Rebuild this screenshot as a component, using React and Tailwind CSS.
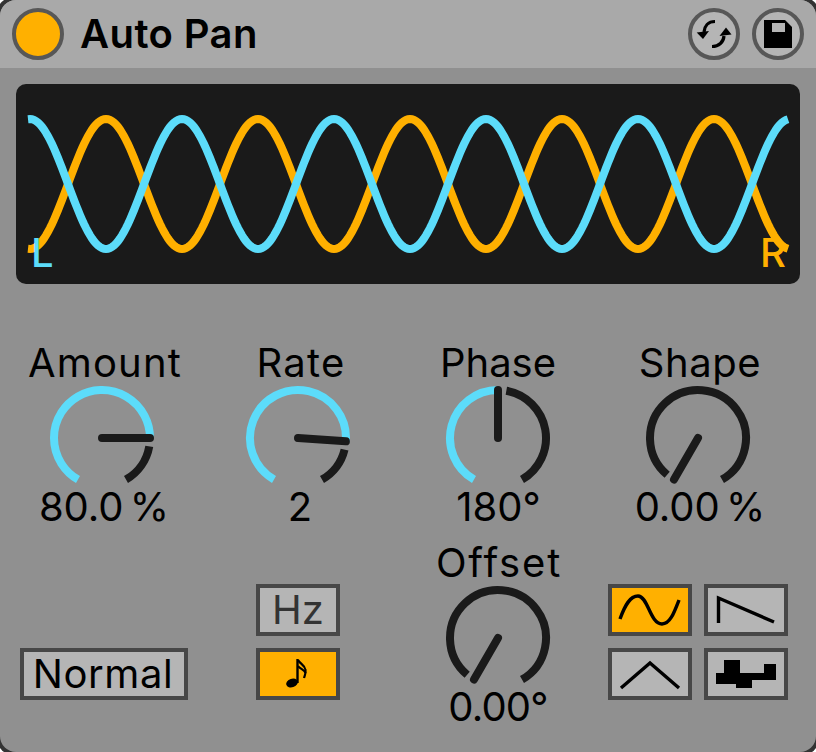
const CYAN = "#5cdcfa";
const DARK = "#1a1a1a";
const AMBER = "#ffb000";

function wavePath(phase) {
  const pts = [];
  for (let x = 28; x <= 788; x += 2) {
    const y = 184 - 65 * Math.cos(((x - 30) / 152) * 2 * Math.PI + phase);
    pts.push(`${x - 16},${(y - 84).toFixed(2)}`);
  }
  return "M" + pts.join("L");
}

function Knob({ angle, gap = 10 }) {
  const r = 48;
  const c = 54;
  const pt = (deg) => {
    const a = (deg * Math.PI) / 180;
    return [c + r * Math.sin(a), c - r * Math.cos(a)];
  };
  const arc = (from, to) => {
    const [x1, y1] = pt(from);
    const [x2, y2] = pt(to);
    const large = to - from > 180 ? 1 : 0;
    return `M${x1.toFixed(2)} ${y1.toFixed(2)}A${r} ${r} 0 ${large} 1 ${x2.toFixed(2)} ${y2.toFixed(2)}`;
  };
  const [tx, ty] = pt(angle);
  return (
    <svg width="108" height="108" viewBox="0 0 108 108" className="block shrink-0">
      {angle > -150 && <path d={arc(-150, angle)} fill="none" stroke={CYAN} strokeWidth="8" />}
      <path d={arc(angle + gap, 150)} fill="none" stroke={DARK} strokeWidth="8" />
      <line x1={c} y1={c} x2={tx} y2={ty} stroke={DARK} strokeWidth="8" strokeLinecap="round" />
    </svg>
  );
}

function KnobCol({ label, value, angle, gap, labelClass = "", valueClass = "" }) {
  return (
    <div className="flex flex-col items-center">
      <div className={`h-[42px] whitespace-nowrap leading-[42px] ${labelClass}`}>{label}</div>
      <Knob angle={angle} gap={gap} />
      <div className={`-mt-[3px] h-[36px] whitespace-nowrap leading-[36px] [word-spacing:-5px] ${valueClass}`}>{value}</div>
    </div>
  );
}

function Btn({ on, className = "", children }) {
  return (
    <div
      className={`flex h-[52px] w-[84px] items-center justify-center border-4 border-[#474747] ${on ? "bg-[#ffb000]" : "bg-[#b5b5b5]"} ${className}`}
    >
      {children}
    </div>
  );
}

function Icon({ children }) {
  return (
    <svg width="76" height="44" viewBox="0 0 76 44" className="block">
      {children}
    </svg>
  );
}

export default function App() {
  return (
    <div className="h-[752px] w-[816px] overflow-hidden bg-white">
      <div
        className="flex h-[752px] w-[816px] flex-col overflow-hidden rounded-[16px] bg-[#909090] text-[40px] text-black shadow-[0_0_0_4px_#333333]"
        style={{ fontFamily: '"Inter", "Liberation Sans", sans-serif' }}
      >
        <header className="flex h-[68px] shrink-0 items-center bg-[#a9a9a9] pl-3 pr-3">
          <div className="h-[52px] w-[52px] rounded-full border-4 border-[#575757] bg-[#ffb000]" />
          <div className="ml-[16px] font-semibold leading-none tracking-[0.4px]">Auto Pan</div>
          <div className="ml-auto flex gap-3">
            <div className="flex h-[52px] w-[52px] items-center justify-center rounded-full border-4 border-[#575757] bg-[#b5b5b5]">
              <svg width="36" height="36" viewBox="0 0 36 36" fill="none">
                <path d="M19 5.5C12 5.5 8.5 10 8 16" stroke="#000" strokeWidth="3.2" />
                <path d="M16 30.5C23 30.5 27.5 26 28 20" stroke="#000" strokeWidth="3.2" />
                <path d="M0.7 16.5L13 15L7 23Z" fill="#000" />
                <path d="M23.5 20L35.5 18.5L30 11.5Z" fill="#000" />
              </svg>
            </div>
            <div className="flex h-[52px] w-[52px] items-center justify-center rounded-full border-4 border-[#575757] bg-[#b5b5b5]">
              <svg width="36" height="36" viewBox="0 0 36 36">
                <path d="M4 4H25L32 11V32H4Z" fill="#000" />
                <rect x="12" y="7" width="13" height="9" fill="#b5b5b5" />
              </svg>
            </div>
          </div>
        </header>

        <section className="px-4 pt-4">
          <div className="relative h-[200px] w-[784px] overflow-hidden rounded-[10px] bg-[#1a1a1a]">
            <svg width="784" height="200" viewBox="0 0 784 200" className="block">
              <path d={wavePath(Math.PI)} fill="none" stroke={AMBER} strokeWidth="8" />
              <path d={wavePath(0)} fill="none" stroke={CYAN} strokeWidth="8" />
            </svg>
            <span className="absolute left-[15px] top-[149px] font-medium leading-[40px] text-[#5cdcfa]">L</span>
            <span className="absolute left-[744px] top-[149px] font-medium leading-[40px] text-[#ffb000]">R</span>
          </div>
        </section>

        <section className="mt-[58px] grid grid-cols-[204px_188px_212px_188px]">
          <KnobCol label="Amount" value="80.0 %" angle={90} labelClass="ml-[6px] tracking-[1.2px]" valueClass="ml-[4px]" />
          <KnobCol label="Rate" value="2" angle={94} labelClass="ml-[6px] tracking-[1.2px]" valueClass="ml-[4px]" />
          <KnobCol label="Phase" value="180°" angle={0} labelClass="tracking-[0px]" valueClass="ml-[1px]" />
          <KnobCol label="Shape" value="0.00 %" angle={-150} labelClass="ml-[4px] tracking-[0.6px]" valueClass="ml-[4px]" />
        </section>

        <section className="mt-[17px] grid grid-cols-[204px_188px_212px_188px]">
          <div className="pl-5 pt-[106px]">
            <Btn className="w-[168px]"><span className="-ml-[2px] tracking-[0.6px]">Normal</span></Btn>
          </div>
          <div className="flex flex-col gap-3 pl-[52px] pt-[42px]">
            <Btn><span className="text-[#333333]">Hz</span></Btn>
            <Btn on>
              <svg width="32" height="36" viewBox="0 0 32 36">
                <ellipse cx="10" cy="27" rx="6" ry="4.2" transform="rotate(-18 10 27)" fill="#000" />
                <path d="M15.5 27V3" stroke="#000" strokeWidth="2.4" />
                <path d="M16 4C18 8 23 9 23.5 14C24 18 22.5 20 22 22" fill="none" stroke="#000" strokeWidth="2.2" />
                <path d="M16 10C18 13 23 14 23.5 17" fill="none" stroke="#000" strokeWidth="2.2" />
              </svg>
            </Btn>
          </div>
          <KnobCol label="Offset" value="0.00°" angle={-150} labelClass="ml-[2px] tracking-[1.8px]" valueClass="tracking-[-0.8px]" />
          <div className="grid grid-cols-[84px_84px] gap-x-3 gap-y-3 self-start pl-1 pt-[42px]">
            <Btn on>
              <Icon>
                <path d="M8 31C13 17 18 8 26 8C36 8 38 36 50 36C58 36 62 25 67 12" fill="none" stroke="#000" strokeWidth="3.4" />
              </Icon>
            </Btn>
            <Btn>
              <Icon>
                <path d="M10.5 35V10L66 34" fill="none" stroke="#000" strokeWidth="3.4" />
              </Icon>
            </Btn>
            <Btn>
              <Icon>
                <path d="M9 36L38 11L67 36" fill="none" stroke="#000" strokeWidth="3.4" />
              </Icon>
            </Btn>
            <Btn>
              <Icon>
                <path d="M8 21H16V8H32V21H56V12H68V28H44V36H28V32H8Z" fill="#000" />
              </Icon>
            </Btn>
          </div>
        </section>
      </div>
    </div>
  );
}
